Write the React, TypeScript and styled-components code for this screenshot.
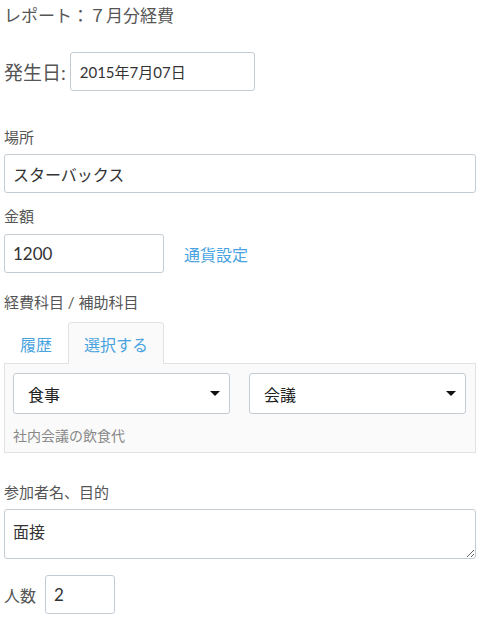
import styled, { createGlobalStyle } from 'styled-components';

const GlobalStyle = createGlobalStyle`
  body {
    margin: 0;
    background: #fff;
    font-family: Lato, "Noto Sans CJK JP", sans-serif;
    color: #555;
  }
`;

const Page = styled.div`
  width: 472px;
  padding: 0 4px;
  display: flex;
  flex-direction: column;
`;

const Title = styled.h1`
  margin: 5px 0 0;
  font-size: 17px;
  font-weight: normal;
  line-height: 22px;
  color: #555;
`;

const DateRow = styled.div`
  display: flex;
  align-items: center;
  gap: 4px;
  margin-top: 25px;
`;

const DateLabel = styled.label`
  font-size: 19px;
  color: #555;
`;

const Label = styled.label<{ $top: number }>`
  display: block;
  margin-top: ${(p) => p.$top}px;
  font-size: 15px;
  line-height: 20px;
  color: #555;
`;

const TextInput = styled.input<{ $width?: number; $height?: number; $size?: number }>`
  box-sizing: border-box;
  width: ${(p) => (p.$width ? `${p.$width}px` : '100%')};
  height: ${(p) => p.$height ?? 39}px;
  padding: 0 ${(p) => ((p.$size ?? 16) < 16 ? 9 : 8)}px;
  border: 1px solid #c3cbd3;
  border-radius: 3px;
  background: #fff;
  font-family: Lato, "Noto Sans CJK JP", sans-serif;
  font-size: ${(p) => p.$size ?? 16}px;
  color: #333;
  outline: none;
`;

const FieldRow = styled.div<{ $top: number }>`
  display: flex;
  align-items: center;
  gap: 20px;
  margin-top: ${(p) => p.$top}px;
`;

const Link = styled.a`
  font-size: 16px;
  color: #4aa3df;
  text-decoration: none;
  cursor: pointer;
`;

const Tabs = styled.div`
  display: flex;
  margin-top: 10px;
`;

const Tab = styled.div<{ $active?: boolean }>`
  box-sizing: border-box;
  height: 42px;
  padding: 0 15px;
  display: flex;
  align-items: center;
  font-size: 16px;
  color: #4aa3df;
  border: 1px solid ${(p) => (p.$active ? '#e3e3e3' : 'transparent')};
  border-bottom: none;
  border-radius: 4px 4px 0 0;
  background: ${(p) => (p.$active ? '#fafafa' : 'transparent')};
  margin-bottom: -1px;
  position: relative;
  z-index: 1;
  cursor: pointer;
`;

const Panel = styled.div`
  box-sizing: border-box;
  border: 1px solid #e3e3e3;
  background: #fafafa;
  padding: 9px 9px 7px 8px;
`;

const SelectRow = styled.div`
  display: flex;
  gap: 19px;
`;

const Select = styled.div`
  box-sizing: border-box;
  flex: 1;
  height: 41px;
  padding: 0 9px 0 14px;
  display: flex;
  align-items: center;
  justify-content: space-between;
  border: 1px solid #c3cbd3;
  border-radius: 3px;
  background: #fff;
  font-size: 16px;
  color: #222;
`;

const Caret = styled.span`
  width: 0;
  height: 0;
  border-left: 5px solid transparent;
  border-right: 5px solid transparent;
  border-top: 5px solid #111;
`;

const Hint = styled.div`
  margin-top: 13px;
  font-size: 14px;
  line-height: 18px;
  color: #888;
`;

const TextArea = styled.textarea`
  box-sizing: border-box;
  width: 100%;
  height: 50px;
  margin-top: 7px;
  padding: 9px 8px;
  border: 1px solid #c3cbd3;
  border-radius: 3px;
  font-family: Lato, "Noto Sans CJK JP", sans-serif;
  font-size: 16px;
  color: #333;
  resize: vertical;
  outline: none;
`;

const CountRow = styled.div`
  display: flex;
  align-items: center;
  gap: 9px;
  margin-top: 16px;
`;

const CountLabel = styled.label`
  font-size: 16px;
  color: #555;
`;

export default function App() {
  return (
    <>
      <GlobalStyle />
      <Page>
        <Title>レポート：７月分経費</Title>
        <DateRow>
          <DateLabel>発生日:</DateLabel>
          <TextInput $width={185} $height={39} $size={15} defaultValue="2015年7月07日" />
        </DateRow>

        <Label $top={36}>場所</Label>
        <div style={{ marginTop: 7 }}>
          <TextInput defaultValue="スターバックス" />
        </div>

        <Label $top={13}>金額</Label>
        <FieldRow $top={8}>
          <TextInput $width={160} $size={17} defaultValue="1200" />
          <Link>通貨設定</Link>
        </FieldRow>

        <Label $top={19}>経費科目 / 補助科目</Label>
        <Tabs>
          <Tab>履歴</Tab>
          <Tab $active>選択する</Tab>
        </Tabs>
        <Panel>
          <SelectRow>
            <Select>
              食事
              <Caret />
            </Select>
            <Select>
              会議
              <Caret />
            </Select>
          </SelectRow>
          <Hint>社内会議の飲食代</Hint>
        </Panel>

        <Label $top={29}>参加者名、目的</Label>
        <TextArea defaultValue="面接" />

        <CountRow>
          <CountLabel>人数</CountLabel>
          <TextInput $width={70} $size={17} defaultValue="2" />
        </CountRow>
      </Page>
    </>
  );
}
